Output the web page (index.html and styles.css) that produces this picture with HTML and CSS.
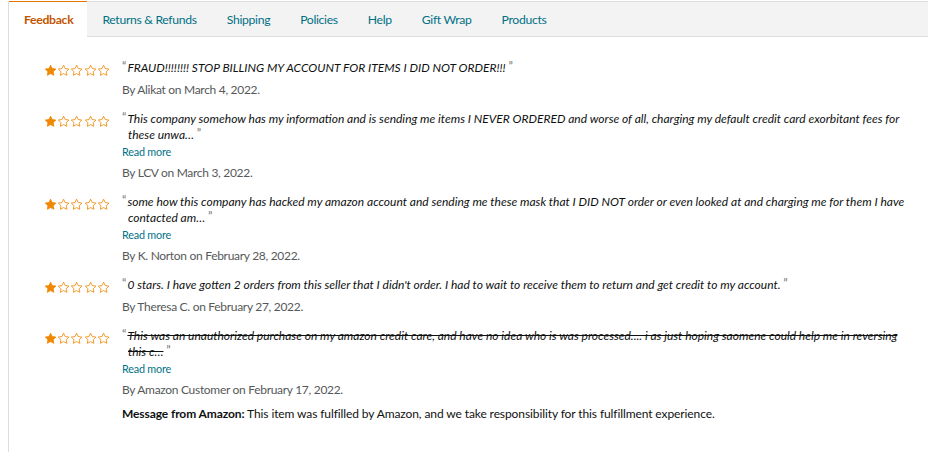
FILE: index.html
```html
<!DOCTYPE html>
<html lang="en">
<head>
<meta charset="utf-8">
<title>Seller feedback</title>
<link rel="stylesheet" href="styles.css">
</head>
<body>
<svg width="0" height="0" class="defs" aria-hidden="true">
  <defs>
    <path id="star" d="M12 2.2l2.95 6.1 6.7.95-4.85 4.7 1.15 6.65L12 17.45 6.05 20.6l1.15-6.65-4.85-4.7 6.7-.95z"/>
  </defs>
</svg>
<div class="panel">
  <ul class="tabs">
    <li class="tab active">Feedback</li>
    <li class="tab">Returns &amp; Refunds</li>
    <li class="tab">Shipping</li>
    <li class="tab">Policies</li>
    <li class="tab">Help</li>
    <li class="tab">Gift Wrap</li>
    <li class="tab">Products</li>
  </ul>
  <div class="reviews">
    <div class="review">
      <div class="stars">
        <svg viewBox="0 0 24 24" class="s full"><use href="#star"/></svg><svg viewBox="0 0 24 24" class="s"><use href="#star"/></svg><svg viewBox="0 0 24 24" class="s"><use href="#star"/></svg><svg viewBox="0 0 24 24" class="s"><use href="#star"/></svg><svg viewBox="0 0 24 24" class="s"><use href="#star"/></svg>
      </div>
      <div class="body">
        <p class="quote"><span class="q">“</span>FRAUD!!!!!!!! STOP BILLING MY ACCOUNT FOR ITEMS I DID NOT ORDER!!! <span class="q">”</span></p>
        <p class="by">By Alikat on March 4, 2022.</p>
      </div>
    </div>
    <div class="review">
      <div class="stars">
        <svg viewBox="0 0 24 24" class="s full"><use href="#star"/></svg><svg viewBox="0 0 24 24" class="s"><use href="#star"/></svg><svg viewBox="0 0 24 24" class="s"><use href="#star"/></svg><svg viewBox="0 0 24 24" class="s"><use href="#star"/></svg><svg viewBox="0 0 24 24" class="s"><use href="#star"/></svg>
      </div>
      <div class="body">
        <p class="quote"><span class="q">“</span>This company somehow has my information and is sending me items I NEVER ORDERED and worse of all, charging my default credit card exorbitant fees for these unwa… <span class="q">”</span></p>
        <a class="more" href="#">Read more</a>
        <p class="by">By LCV on March 3, 2022.</p>
      </div>
    </div>
    <div class="review">
      <div class="stars">
        <svg viewBox="0 0 24 24" class="s full"><use href="#star"/></svg><svg viewBox="0 0 24 24" class="s"><use href="#star"/></svg><svg viewBox="0 0 24 24" class="s"><use href="#star"/></svg><svg viewBox="0 0 24 24" class="s"><use href="#star"/></svg><svg viewBox="0 0 24 24" class="s"><use href="#star"/></svg>
      </div>
      <div class="body">
        <p class="quote"><span class="q">“</span>some how this company has hacked my amazon account and sending me these mask that I DID NOT order or even looked at and charging me for them I have contacted am… <span class="q">”</span></p>
        <a class="more" href="#">Read more</a>
        <p class="by">By K. Norton on February 28, 2022.</p>
      </div>
    </div>
    <div class="review">
      <div class="stars">
        <svg viewBox="0 0 24 24" class="s full"><use href="#star"/></svg><svg viewBox="0 0 24 24" class="s"><use href="#star"/></svg><svg viewBox="0 0 24 24" class="s"><use href="#star"/></svg><svg viewBox="0 0 24 24" class="s"><use href="#star"/></svg><svg viewBox="0 0 24 24" class="s"><use href="#star"/></svg>
      </div>
      <div class="body">
        <p class="quote"><span class="q">“</span>0 stars. I have gotten 2 orders from this seller that I didn't order. I had to wait to receive them to return and get credit to my account. <span class="q">”</span></p>
        <p class="by">By Theresa C. on February 27, 2022.</p>
      </div>
    </div>
    <div class="review">
      <div class="stars">
        <svg viewBox="0 0 24 24" class="s full"><use href="#star"/></svg><svg viewBox="0 0 24 24" class="s"><use href="#star"/></svg><svg viewBox="0 0 24 24" class="s"><use href="#star"/></svg><svg viewBox="0 0 24 24" class="s"><use href="#star"/></svg><svg viewBox="0 0 24 24" class="s"><use href="#star"/></svg>
      </div>
      <div class="body">
        <p class="quote"><span class="q">“</span><span class="struck">This was an unauthorized purchase on my amazon credit care, and have no idea who is was processed.... i as just hoping saomene could help me in reversing this c…</span> <span class="q">”</span></p>
        <a class="more" href="#">Read more</a>
        <p class="by">By Amazon Customer on February 17, 2022.</p>
        <p class="msg"><b>Message from Amazon:</b> This item was fulfilled by Amazon, and we take responsibility for this fulfillment experience.</p>
      </div>
    </div>
  </div>
</div>
</body>
</html>
```
FILE: styles.css
```css
html, body {
  margin: 0;
  padding: 0;
  background: #ffffff;
}
body {
  font-family: Lato, "Liberation Sans", Arial, sans-serif;
  font-size: 12px;
  letter-spacing: -0.3px;
  color: #0f1111;
}
.defs {
  position: absolute;
  width: 0;
  height: 0;
}
.panel {
  margin: 1px 0 0 8px;
  border-left: 1px solid #dddddd;
  min-height: 451px;
  box-sizing: border-box;
}
.tabs {
  list-style: none;
  margin: 0;
  padding: 0;
  display: flex;
  background: #f3f3f3;
  border-top: 1px solid #dddddd;
  border-bottom: 1px solid #dddddd;
  height: 34px;
}
.tab {
  padding: 0 15px;
  line-height: 35px;
  font-size: 12.2px;
  letter-spacing: -0.32px;
  color: #007185;
  white-space: nowrap;
}
.tab.active {
  background: #ffffff;
  color: #c45500;
  font-weight: 700;
  letter-spacing: -0.3px;
  border-top: 1px solid #e77600;
  margin-top: -1px;
  height: 35px;
  margin-bottom: -1px;
  padding: 0 14px 0 15px;
}
.reviews {
  padding: 23px 12px 0 35px;
  display: flex;
  flex-direction: column;
  gap: 12px;
}
.review {
  display: flex;
  gap: 12px;
}
.stars {
  display: flex;
  width: 66px;
  flex: none;
  margin-top: 4px;
  height: 14px;
}
.s {
  width: 13.2px;
  height: 13.2px;
  fill: #ffffff;
  stroke: #f08804;
  stroke-width: 1.5;
  stroke-linejoin: round;
}
.s.full {
  fill: #f08804;
}
.body {
  flex: 1;
  min-width: 0;
}
.quote {
  margin: 0;
  padding-left: 6px;
  font-style: italic;
  font-size: 12px;
  letter-spacing: 0;
  line-height: 16px;
  color: #0f1111;
}
.q {
  font-style: normal;
  font-size: 12px;
  color: #6f7373;
  vertical-align: 2px;
  line-height: 0;
}
.quote > .q:first-child {
  margin-left: -6px;
  margin-right: 1px;
}
.struck {
  text-decoration: line-through;
}
.more {
  display: block;
  margin-top: 1px;
  font-size: 10.8px;
  letter-spacing: -0.2px;
  line-height: 15px;
  color: #007185;
  text-decoration: none;
}
.by {
  margin: 5px 0 0;
  line-height: 18px;
  color: #565959;
}
.msg {
  margin: 6px 0 0;
  line-height: 18px;
  font-size: 12px;
  letter-spacing: -0.1px;
  color: #0f1111;
}
.msg b {
  font-weight: 700;
}
```
